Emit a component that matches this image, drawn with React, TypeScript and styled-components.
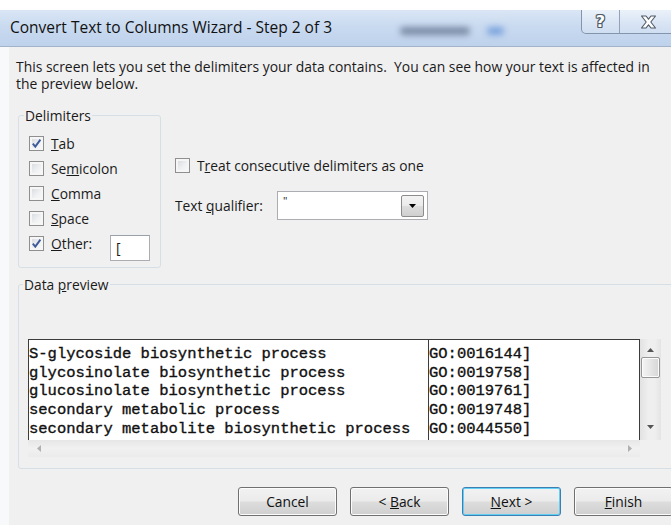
import React from 'react';
import styled, { createGlobalStyle } from 'styled-components';

const GlobalStyle = createGlobalStyle`
  html, body {
    margin: 0;
    padding: 0;
    background: #ffffff;
  }
  * {
    box-sizing: border-box;
  }
`;

const Window = styled.div`
  position: relative;
  width: 671px;
  height: 525px;
  overflow: hidden;
  background: #ffffff;
  font-family: 'Open Sans', 'Noto Sans', 'Liberation Sans', sans-serif;
  color: #1a1a1a;
  display: flex;
  flex-direction: column;
`;

const TitleBar = styled.div`
  position: relative;
  margin-top: 10px;
  height: 37px;
  display: flex;
  justify-content: space-between;
  align-items: flex-start;
  background: linear-gradient(to bottom, #dae6f5 0%, #c9daf0 45%, #bfd2ec 100%);
  border-bottom: 1px solid #a3b3c9;
`;

const Title = styled.div`
  padding: 8px 0 0 10px;
  font-size: 15.5px;
  line-height: 18px;
  color: #111111;
`;

/* soft shapes showing through the glass frame */
const Haze = styled.span<{ $left: number; $width: number; $color: string }>`
  position: absolute;
  top: 17px;
  left: ${(p) => p.$left}px;
  width: ${(p) => p.$width}px;
  height: 8px;
  border-radius: 4px;
  background: ${(p) => p.$color};
  filter: blur(3px);
`;

const CaptionButtons = styled.div`
  display: flex;
  height: 24px;
  margin-right: -6px;
  border: 1px solid #8494ad;
  border-top: none;
  border-radius: 0 0 0 5px;
  background: linear-gradient(to bottom, rgba(255, 255, 255, 0.45), rgba(214, 226, 243, 0.6));
`;

const CaptionButton = styled.div<{ $width: number }>`
  width: ${(p) => p.$width}px;
  display: flex;
  align-items: center;
  justify-content: center;
  & + & {
    border-left: 1px solid #93a2b8;
  }
`;

const HelpGlyph = styled.span`
  font-family: 'DejaVu Sans', sans-serif;
  font-weight: bold;
  font-size: 16px;
  line-height: 16px;
  color: #ffffff;
  text-shadow: 1px 0 0 #515b67, -1px 0 0 #515b67, 0 1px 0 #515b67, 0 -1px 0 #515b67,
    1px 1px 0 #515b67, -1px -1px 0 #515b67, 1px -1px 0 #515b67, -1px 1px 0 #515b67;
`;

const Body = styled.div`
  flex: 1;
  background: #f0f0f0;
  border-left: 9px solid #f8f9fb;
  padding-top: 11px;
`;

const Intro = styled.p`
  margin: 0;
  padding-left: 7px;
  font-size: 13.9px;
  line-height: 17px;
  width: 655px;
`;

const Options = styled.div`
  display: flex;
  align-items: flex-start;
  margin-top: 15px;
  padding-left: 9px;
`;

const Group = styled.fieldset`
  margin: 0;
  min-width: 0;
  border: 1px solid #d5dfe5;
  border-radius: 3px;
  font-size: 13.8px;
`;

const Legend = styled.legend`
  padding: 0 1px;
  margin-left: -5px;
  line-height: 17px;
  font-size: 13.8px;
`;

const DelimiterGroup = styled(Group)`
  width: 143px;
  padding: 7px 0 11px 10px;
`;

const CheckRow = styled.div`
  display: flex;
  align-items: center;
  height: 25px;
  line-height: 17px;
`;

const Box = styled.span`
  width: 15px;
  height: 15px;
  flex: none;
  border: 1px solid #8f8f8f;
  background: linear-gradient(135deg, #d3d6da 0%, #eef0f2 55%, #fbfbfb 100%);
  box-shadow: inset 0 0 0 2px #f6f6f6;
  display: flex;
  align-items: center;
  justify-content: center;
`;

const CheckLabel = styled.span<{ $width?: number }>`
  margin-left: 7px;
  ${(p) => (p.$width ? `width: ${p.$width}px;` : '')}
`;

const OtherInput = styled.div`
  width: 40px;
  height: 26px;
  margin-top: 8px;
  border: 1px solid #abadb3;
  border-top-color: #9aa0a8;
  background: #ffffff;
  font-size: 14px;
  padding: 4px 0 0 5px;
  line-height: 16px;
`;

const SideOptions = styled.div`
  margin-left: 14px;
  padding-top: 49px;
  font-size: 13.8px;
  display: flex;
  flex-direction: column;
  gap: 17px;
`;

const TreatRow = styled(CheckRow)`
  height: 18px;
`;

const QualifierRow = styled.div`
  display: flex;
  align-items: center;
  height: 29px;
`;

const QualifierLabel = styled.span`
  width: 102px;
  line-height: 17px;
`;

const Select = styled.div`
  width: 151px;
  height: 29px;
  border: 1px solid #abadb3;
  background: #ffffff;
  display: flex;
  justify-content: space-between;
  padding: 3px 3px 3px 5px;
`;

const SelectValue = styled.span`
  font-size: 11px;
  line-height: 11px;
`;

const DropButton = styled.div`
  width: 23px;
  height: 22px;
  border: 1px solid #8c8c8c;
  border-radius: 2px;
  background: linear-gradient(to bottom, #f3f3f3 0%, #ebebeb 48%, #dddddd 52%, #cfcfcf 100%);
  display: flex;
  align-items: center;
  justify-content: center;
`;

const PreviewGroup = styled(Group)`
  margin: 8px 0 0 9px;
  width: 680px;
  padding: 46px 0 11px 9px;
`;

const PreviewGrid = styled.div`
  display: grid;
  grid-template-columns: 612px 21px;
  grid-template-rows: 101px 17px;
`;

const DataArea = styled.div`
  background: #ffffff;
  border: 1px solid #3c3c3c;
  border-bottom: none;
  display: flex;
  overflow: hidden;
`;

const DataColumn = styled.div<{ $width?: number }>`
  ${(p) => (p.$width ? `width: ${p.$width}px; border-right: 1px solid #3c3c3c;` : 'flex: 1;')}
  padding-top: 5px;
  font-family: 'Liberation Mono', 'Courier New', monospace;
  font-size: 15.5px;
  line-height: 18.7px;
  color: #111111;
  -webkit-text-stroke: 0.35px #111111;
  white-space: pre;
`;

const VScroll = styled.div`
  background: linear-gradient(to right, #e2e2e2, #efefef 40%, #efefef 70%, #e4e4e4);
  display: flex;
  flex-direction: column;
  align-items: center;
  padding: 9px 0 11px;
`;

const Thumb = styled.div`
  width: 19px;
  height: 21px;
  margin-top: 5px;
  border: 1px solid #979797;
  border-radius: 2px;
  background: linear-gradient(to right, #f4f4f4, #e6e6e6 50%, #d6d6d6);
  box-shadow: inset 0 0 0 1px #fbfbfb;
`;

const ArrowSpacer = styled.div`
  flex: 1;
`;

const HScroll = styled.div`
  background: linear-gradient(to bottom, #e6e6e6, #f1f1f1 50%, #ebebeb);
  display: flex;
  align-items: center;
  justify-content: space-between;
  padding: 0 8px 0 9px;
`;

const Corner = styled.div`
  background: #f0f0f0;
`;

const ButtonRow = styled.div`
  display: flex;
  gap: 13px;
  margin-top: 18px;
  padding-left: 229px;
`;

const Button = styled.div<{ $default?: boolean }>`
  flex: none;
  width: 99px;
  height: 29px;
  border: 1px solid ${(p) => (p.$default ? '#3c7fb1' : '#707070')};
  border-radius: 3px;
  background: linear-gradient(to bottom, #f2f2f2 0%, #ebebeb 48%, #dddddd 52%, #cfcfcf 100%);
  box-shadow: inset 0 0 0 1px ${(p) => (p.$default ? '#62d0f5' : '#fcfcfc')};
  display: flex;
  align-items: center;
  justify-content: center;
  font-size: 13.8px;
  color: #111111;
  white-space: pre;
`;

type Triangle = 'up' | 'down' | 'left' | 'right';

const arrowPoints: Record<Triangle, string> = {
  up: '0,4 3.5,0 7,4',
  down: '0,0 3.5,4 7,0',
  left: '4,0 0,3.5 4,7',
  right: '0,0 4,3.5 0,7',
};

const Arrow: React.FC<{ dir: Triangle; color: string }> = ({ dir, color }) => {
  const vertical = dir === 'up' || dir === 'down';
  return (
    <svg width={vertical ? 7 : 4} height={vertical ? 4 : 7} viewBox={vertical ? '0 0 7 4' : '0 0 4 7'}>
      <polygon points={arrowPoints[dir]} fill={color} />
    </svg>
  );
};

const CheckBox: React.FC<{ checked?: boolean }> = ({ checked }) => (
  <Box>
    {checked && (
      <svg width="11" height="11" viewBox="0 0 11 11">
        <path d="M1.8 5.6 L4.3 8.6 L9.4 1.6" fill="none" stroke="#3e5a99" strokeWidth="1.9" />
      </svg>
    )}
  </Box>
);

const CloseIcon = () => (
  <svg width="17" height="14" viewBox="0 0 17 14">
    <path
      d="M1.5 1 H6 L8.5 4.2 L11 1 H15.5 L10.8 7 L15.5 13 H11 L8.5 9.8 L6 13 H1.5 L6.2 7 Z"
      fill="#ffffff"
      stroke="#4f5966"
      strokeWidth="1.1"
      strokeLinejoin="round"
    />
  </svg>
);

const previewRows = [
  ['S-glycoside biosynthetic process', 'GO:0016144]'],
  ['glycosinolate biosynthetic process', 'GO:0019758]'],
  ['glucosinolate biosynthetic process', 'GO:0019761]'],
  ['secondary metabolic process', 'GO:0019748]'],
  ['secondary metabolite biosynthetic process', 'GO:0044550]'],
];

const delimiters: { label: React.ReactNode; checked: boolean }[] = [
  { label: <><u>T</u>ab</>, checked: true },
  { label: <>Se<u>m</u>icolon</>, checked: false },
  { label: <><u>C</u>omma</>, checked: false },
  { label: <><u>S</u>pace</>, checked: false },
];

const App: React.FC = () => {
  return (
    <Window>
      <GlobalStyle />
      <TitleBar>
        <Title>Convert Text to Columns Wizard - Step 2 of 3</Title>
        <Haze $left={400} $width={70} $color="rgba(45, 62, 92, 0.5)" />
        <Haze $left={487} $width={17} $color="#7aa3dd" />
        <CaptionButtons>
          <CaptionButton $width={37}>
            <HelpGlyph>?</HelpGlyph>
          </CaptionButton>
          <CaptionButton $width={57}>
            <CloseIcon />
          </CaptionButton>
        </CaptionButtons>
      </TitleBar>

      <Body>
        <Intro>
          This screen lets you set the delimiters your data contains.&nbsp; You can see how your text is affected in
          the preview below.
        </Intro>

        <Options>
          <DelimiterGroup>
            <Legend>Delimiters</Legend>
            {delimiters.map((d, i) => (
              <CheckRow key={i}>
                <CheckBox checked={d.checked} />
                <CheckLabel>{d.label}</CheckLabel>
              </CheckRow>
            ))}
            <CheckRow>
              <CheckBox checked />
              <CheckLabel $width={59}>
                <u>O</u>ther:
              </CheckLabel>
              <OtherInput>[</OtherInput>
            </CheckRow>
          </DelimiterGroup>

          <SideOptions>
            <TreatRow>
              <CheckBox />
              <CheckLabel>
                T<u>r</u>eat consecutive delimiters as one
              </CheckLabel>
            </TreatRow>
            <QualifierRow>
              <QualifierLabel>
                Text <u>q</u>ualifier:
              </QualifierLabel>
              <Select>
                <SelectValue>"</SelectValue>
                <DropButton>
                  <Arrow dir="down" color="#000000" />
                </DropButton>
              </Select>
            </QualifierRow>
          </SideOptions>
        </Options>

        <PreviewGroup>
          <Legend>
            Data <u>p</u>review
          </Legend>
          <PreviewGrid>
            <DataArea>
              <DataColumn $width={400}>{previewRows.map((r) => r[0]).join('\n')}</DataColumn>
              <DataColumn>{previewRows.map((r) => r[1]).join('\n')}</DataColumn>
            </DataArea>
            <VScroll>
              <Arrow dir="up" color="#555555" />
              <Thumb />
              <ArrowSpacer />
              <Arrow dir="down" color="#555555" />
            </VScroll>
            <HScroll>
              <Arrow dir="left" color="#b0b0b0" />
              <Arrow dir="right" color="#b0b0b0" />
            </HScroll>
            <Corner />
          </PreviewGrid>
        </PreviewGroup>

        <ButtonRow>
          <Button>Cancel</Button>
          <Button>
            {'< '}
            <u>B</u>ack
          </Button>
          <Button $default>
            <u>N</u>ext{' >'}
          </Button>
          <Button>
            <u>F</u>inish
          </Button>
        </ButtonRow>
      </Body>
    </Window>
  );
};

export default App;
